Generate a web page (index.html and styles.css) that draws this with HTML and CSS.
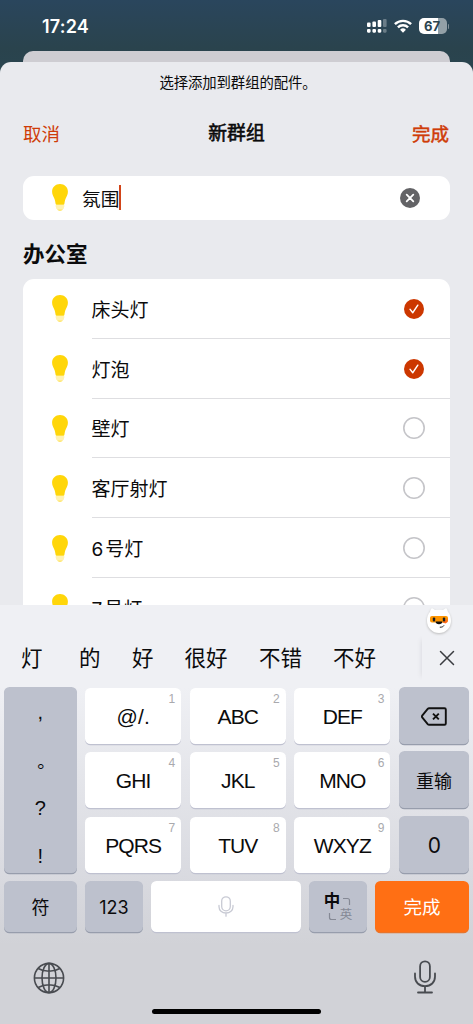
FILE: index.html
```html
<!DOCTYPE html>
<html lang="zh-CN">
<head>
<meta charset="utf-8">
<title>新群组</title>
<link rel="stylesheet" href="styles.css">
</head>
<body>
<svg class="defs" width="0" height="0">
  <symbol id="bulb" viewBox="0 0 16 27">
    <path fill="#ffd60a" d="M8 0C3.500 0 .1 3.300 .1 7.600c0 2.800 1 4.500 2 6.500 1 2.100 1.200 4.200 1.500 5.700.1.700.4 1 1 1h6.800c.6 0 .9-.3 1-1 .3-1.500.5-3.600 1.500-5.700 1-2 2-3.700 2-6.500C15.900 3.300 12.500 0 8 0z"/>
    <path fill="#ffe566" d="M3.700 21.600h8.600v.9H3.700zM3.900 23.400h8.200l-.5 1H4.400zM5 25.300h6c-.7 1.200-1.700 1.700-3 1.700s-2.300-.5-3-1.700z"/>
  </symbol>
  <symbol id="on" viewBox="0 0 22 22">
    <circle cx="11" cy="11" r="10" fill="#cc3700"/>
    <path d="M7.100 11.400l2.700 3.300 5-7.500" fill="none" stroke="#fff" stroke-width="1.500" stroke-linecap="round" stroke-linejoin="round"/>
  </symbol>
  <symbol id="off" viewBox="0 0 22 22">
    <circle cx="11" cy="11" r="10.200" fill="none" stroke="#c5c5c9" stroke-width="1.600"/>
  </symbol>
</svg>
<div class="screen">
  <header class="status">
    <span class="time">17:24</span>
    <div class="indicators">
      <svg class="signal" width="20" height="16" viewBox="0 0 20 16">
        <g fill="#fff"><rect x="0" y="4.500" width="3.600" height="4.500" rx="1"/><rect x="5.400" y="3.500" width="3.600" height="5.500" rx="1"/><rect x="10.700" y="2" width="3.600" height="7" rx="1"/>
        <rect x="0" y="11" width="3.600" height="3.700" rx="1.100"/><rect x="5.400" y="11" width="3.600" height="3.700" rx="1.100"/><rect x="10.700" y="11" width="3.600" height="3.700" rx="1.100"/></g>
        <g fill="#fff" opacity=".3"><rect x="16" y="1" width="3.600" height="8" rx="1"/><rect x="16" y="11" width="3.600" height="3.700" rx="1.100"/></g>
      </svg>
      <svg class="wifi" width="18" height="14" viewBox="0 0 18 14">
        <g fill="none" stroke="#fff" stroke-width="2.400"><path d="M.9 5.200a11.500 11.500 0 0 1 16.200 0"/><path d="M3.900 8.300a7.200 7.200 0 0 1 10.200 0"/></g>
        <path fill="#fff" d="M9 13.800L6.100 10.800a4.100 4.100 0 0 1 5.800 0z"/>
      </svg>
      <div class="battery"><span>67</span></div>
      <i class="nub"></i>
    </div>
  </header>
  <div class="back-sheet"></div>
  <main class="sheet">
    <p class="prompt">选择添加到群组的配件。</p>
    <nav class="nav">
      <span class="cancel">取消</span><h1>新群组</h1><span class="done">完成</span>
    </nav>
    <div class="field">
      <svg class="bulb"><use href="#bulb"/></svg>
      <span class="value">氛围</span><i class="caret"></i>
      <svg class="clear" width="20" height="20" viewBox="0 0 20 20"><circle cx="10" cy="10" r="10" fill="#636366"/><path d="M6.700 6.700l6.600 6.600M13.300 6.700l-6.600 6.600" stroke="#fff" stroke-width="1.800" stroke-linecap="round"/></svg>
    </div>
    <h2>办公室</h2>
    <ul class="list">
      <li><svg class="bulb"><use href="#bulb"/></svg><div class="cell"><span>床头灯</span><svg class="mark"><use href="#on"/></svg></div></li>
      <li><svg class="bulb"><use href="#bulb"/></svg><div class="cell"><span>灯泡</span><svg class="mark"><use href="#on"/></svg></div></li>
      <li><svg class="bulb"><use href="#bulb"/></svg><div class="cell"><span>壁灯</span><svg class="mark"><use href="#off"/></svg></div></li>
      <li><svg class="bulb"><use href="#bulb"/></svg><div class="cell"><span>客厅射灯</span><svg class="mark"><use href="#off"/></svg></div></li>
      <li><svg class="bulb"><use href="#bulb"/></svg><div class="cell"><span><b>6</b>号灯</span><svg class="mark"><use href="#off"/></svg></div></li>
      <li><svg class="bulb"><use href="#bulb"/></svg><div class="cell"><span><b>7</b>号灯</span><svg class="mark"><use href="#off"/></svg></div></li>
    </ul>
  </main>
  <section class="keyboard">
    <div class="candidates">
      <div class="words"><span>灯</span><span>的</span><span>好</span><span>很好</span><span>不错</span><span>不好</span></div>
      <div class="close">
        <svg width="16" height="16" viewBox="0 0 16 16"><path d="M1.500 1.500l13 13M14.500 1.500l-13 13" stroke="#3a3c40" stroke-width="1.500" stroke-linecap="round"/></svg>
      </div>
      <svg class="mascot" width="28" height="28" viewBox="0 0 28 28">
        <path fill="#fff" d="M2 14C2 9 3.500 6.500 5 5c.5-2.500 1.400-4 2.600-3.600.9.300 1.800.9 2.500 1.700 2.500-.6 5.300-.6 7.800 0 .7-.8 1.600-1.400 2.500-1.700C21.600 1 22.500 2.500 23 5c1.500 1.500 3 4 3 9a12 12 0 0 1-24 0z"/>
        <rect x="5" y="9" width="18" height="6.500" rx="2" fill="#ff9500"/>
        <path d="M17.500 15.500l5-4v3.500l-2 1.500z" fill="#ff6a1a"/>
        <rect x="7.800" y="10.500" width="2.400" height="4" rx="1" fill="#17202a"/><rect x="17.800" y="10.500" width="2.400" height="4" rx="1" fill="#17202a"/>
        <path d="M10.600 14.600h6.800c0 1.800-1.300 2.700-3.400 2.700s-3.400-.9-3.400-2.700z" fill="#111"/>
        <path d="M14.800 20.200c2 .1 3.500-.5 4.200-1.800" fill="none" stroke="#222" stroke-width="1"/>
      </svg>
    </div>
    <div class="pad">
      <div class="key gray punct"><span>,</span><span class="stop">。</span><span>?</span><span>!</span></div>
      <div class="key wide">@/.<small>1</small></div>
      <div class="key">ABC<small>2</small></div>
      <div class="key">DEF<small>3</small></div>
      <div class="key gray"><svg width="26" height="19" viewBox="0 0 26 19"><path d="M8.200 1.200H23.500a1.300 1.300 0 0 1 1.300 1.300v14a1.300 1.300 0 0 1-1.300 1.300H8.200a2 2 0 0 1-1.500-.7L1.200 10.300a1.300 1.300 0 0 1 0-1.600L6.700 1.900a2 2 0 0 1 1.500-.7z" fill="none" stroke="#111" stroke-width="1.900"/><path d="M12 6.600l5.800 5.800M17.800 6.600L12 12.400" stroke="#111" stroke-width="1.900"/></svg></div>
      <div class="key">GHI<small>4</small></div>
      <div class="key">JKL<small>5</small></div>
      <div class="key">MNO<small>6</small></div>
      <div class="key gray cn">重输</div>
      <div class="key">PQRS<small>7</small></div>
      <div class="key">TUV<small>8</small></div>
      <div class="key">WXYZ<small>9</small></div>
      <div class="key gray zero">0</div>
    </div>
    <div class="bottom">
      <div class="key gray cn">符</div>
      <div class="key gray num">123</div>
      <div class="key space"><svg width="16" height="21" viewBox="0 0 16 21" fill="none" stroke="#c8cad4" stroke-width="1.300" stroke-linecap="round"><rect x="3.700" y=".8" width="8.600" height="14" rx="4.300"/><path d="M1 9.500v1.200c0 3.700 3 6.300 7 6.300s7-2.600 7-6.300V9.500M8 17v3.200"/></svg></div>
      <div class="key gray lang">
        <span class="zh">中</span>
        <svg width="9" height="9" viewBox="0 0 9 9"><path d="M1 1.500h4.500a2 2 0 0 1 2 2V8" fill="none" stroke="#858995" stroke-width="1.200"/></svg>
        <svg width="9" height="9" viewBox="0 0 9 9"><path d="M1.500 1v4.500a2 2 0 0 0 2 2H8" fill="none" stroke="#858995" stroke-width="1.200"/></svg>
        <span class="en">英</span>
      </div>
      <div class="key go">完成</div>
    </div>
    <footer class="system">
      <svg width="32" height="32" viewBox="0 0 32 32" fill="none" stroke="#484b50" stroke-width="1.600"><circle cx="16" cy="16" r="14.600"/><ellipse cx="16" cy="16" rx="7" ry="14.600"/><path d="M16 1.400v29.200M1.400 16h29.200M5.200 6.500c6 3.600 15.600 3.600 21.600 0M5.200 25.500c6-3.600 15.600-3.600 21.600 0"/></svg>
      <svg width="22" height="34" viewBox="0 0 22 34" fill="none" stroke="#484b50" stroke-width="1.800" stroke-linecap="round"><rect x="6.100" y="1.300" width="9.800" height="20.500" rx="4.900"/><path d="M1 13.500v3c0 5.700 4 9.700 10 9.700s10-4 10-9.700v-3M11 26.200v6M4 32.500h14"/></svg>
    </footer>
    <div class="home"></div>
  </section>
</div>
</body>
</html>
```
FILE: styles.css
```css
* { box-sizing: border-box; }
body { margin: 0; font-family: Inter, "Noto Sans CJK SC", sans-serif; color: #0b0b0c; }
.defs { display: block; }
.screen { width: 473px; height: 1024px; overflow: hidden; display: flex; flex-direction: column; background: linear-gradient(#2a465d, #2a434d 48px, #294651 90px); }
.status { height: 50.500px; flex: none; display: flex; justify-content: space-between; padding: 16px 24px 0 42px; color: #fff; }
.time { font-size: 18px; font-weight: 600; line-height: 21px; letter-spacing: .2px; }
.indicators { display: flex; height: 20px; align-items: center; }
.signal { margin-right: 7px; margin-top: 0; }
.wifi { margin-right: 6.500px; }
.battery { width: 28px; height: 15.500px; border-radius: 5px; background: linear-gradient(90deg, #fff 67%, #93a0a7 67%); color: #2b4450; font-size: 13px; font-weight: 700; line-height: 16.500px; text-align: center; padding-right: 1px; }
.nub { width: 1.500px; height: 5px; margin-left: 1px; background: #82919a; border-radius: 0 2px 2px 0; }
.back-sheet { height: 11.500px; flex: none; margin: 0 23px; border-radius: 10px 10px 0 0; background: #cecdd2; }
.sheet { height: 543px; flex: none; overflow: hidden; padding: 0 23px; border-radius: 11px 11px 0 0; background: #e9eaee; }
.prompt { margin: 0; padding: 9.500px 0 0 3px; font-size: 14.400px; line-height: 22px; text-align: center; letter-spacing: -.1px; }
.nav { display: grid; grid-template-columns: 1fr auto 1fr; align-items: center; height: 28px; margin-top: 26px; font-size: 18.500px; line-height: 28px; color: #cf3c08; }
.nav h1 { margin: 0; font-size: 18.800px; font-weight: 400; color: #0b0b0c; -webkit-text-stroke: .6px; }
.done { text-align: right; padding-right: 1px; -webkit-text-stroke: .5px; }
.field { display: flex; align-items: center; height: 43.500px; margin-top: 28.500px; padding: 0 30.500px 0 28.500px; border-radius: 11px; background: #fff; font-size: 18.700px; }
.bulb { width: 16px; height: 27px; flex: none; }
.field .bulb { margin-top: -1px; }
.value { margin: -1px 0 0 14.500px; }
.caret { width: 2px; height: 25px; background: #d24418; }
.clear { margin-left: auto; }
h2 { margin: 19px 0 0; font-size: 21.500px; line-height: 31px; font-weight: 700; }
.list { margin: 9.500px 0 0; padding: 0 0 0 28.500px; list-style: none; border-radius: 11px; background: #fff; }
.list li { display: flex; align-items: center; height: 59.800px; font-size: 19px; }
.cell { flex: 1; height: 100%; margin-left: 24px; padding-right: 25.500px; display: flex; align-items: center; justify-content: space-between; border-bottom: 1px solid #dedee1; }
.cell b { font-weight: 400; margin-right: 2px; }
.mark { width: 22px; height: 22px; margin-top: 1px; }
.keyboard { flex: none; height: 419px; background: linear-gradient(#eff0f4, #eff0f4 82px, #d9dae0 270px, #d1d2d7 340px); }
.candidates { position: relative; height: 82.500px; display: flex; padding-top: 29.500px; justify-content: space-between; }
.words { display: grid; grid-template-columns: 58px 53px 52.500px 74.500px 74px 60px; padding-left: 21px; font-size: 21.500px; line-height: 46px; white-space: nowrap; }
.close { width: 51px; height: 46px; display: flex; align-items: center; justify-content: center; box-shadow: -5px 0 5px -5px #d5d6db; padding-right: 2px; }
.mascot { position: absolute; left: 425px; top: 2px; filter: drop-shadow(0 1px 1px #bbb); }
.pad { display: grid; grid-template-columns: 72.800px 96px 96px 96px 70px; grid-template-rows: repeat(3, 56px); gap: 8.600px; padding-left: 3.800px; }
.key { position: relative; display: flex; align-items: center; justify-content: center; border-radius: 5.500px; background: #fff; box-shadow: 0 1.300px 0 #bfc1d0; font-family: "Liberation Sans", "Noto Sans CJK SC", sans-serif; font-size: 21px; letter-spacing: -.9px; padding: 2px 0 0; }
.key small { position: absolute; right: 6px; top: 4px; font-size: 12px; line-height: 14px; color: #a9a9ad; letter-spacing: 0; }
.wide { letter-spacing: .2px; }
.gray { background: #bdc1cd; box-shadow: 0 1.300px 0 #979dac; margin-top: -.7px; }
.cn { font-size: 18px; letter-spacing: 0; padding: 0; }
.zero { font-family: Inter, sans-serif; padding: 3px 0 0; }
.punct { grid-row: span 3; flex-direction: column; justify-content: flex-start; font-size: 20px; padding: 4px 0 0; letter-spacing: 0; }
.punct span { flex: none; height: 48px; line-height: 43px; }
.punct .stop { padding-left: 12px; line-height: 46px; font-size: 18px; }
.bottom { display: grid; grid-template-columns: 73px 58px 150px 58px 94px; gap: 8px; height: 51px; margin-top: 8.500px; padding-left: 4px; }
.num { font-family: Inter, sans-serif; font-size: 18px; letter-spacing: 0; padding: 2px 0 0; }
.space { padding: 0; }
.lang { display: grid; grid-template-columns: 16px 12px; grid-template-rows: 17px 13px; align-content: center; justify-content: center; justify-items: center; align-items: center; letter-spacing: 0; padding: 4px 0 0; }
.zh { font-size: 16.500px; line-height: 18px; font-weight: 700; margin-top: -2px; }
.en { font-size: 12.500px; line-height: 14px; color: #858995; margin-top: -3px; }
.go { background: #ff6f14; box-shadow: 0 1.300px 0 #e6752d; color: #fff; font-size: 18.500px; letter-spacing: 0; padding: 0; margin-top: -.7px; }
.system { display: flex; align-items: center; justify-content: space-between; height: 74px; margin-top: 8.500px; padding: 0 37px 0 32.500px; }
.system svg:last-child { margin-top: -2px; }
.home { width: 169px; height: 5.500px; margin: -6px auto 0; border-radius: 3px; background: #000; }
```
